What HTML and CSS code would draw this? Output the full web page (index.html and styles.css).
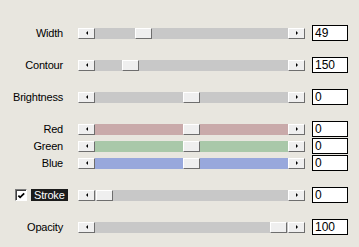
FILE: index.html
```html
<!DOCTYPE html>
<html lang="en">
<head>
  <meta charset="UTF-8">
  <title>Stroke settings</title>
  <link rel="stylesheet" href="styles.css">
</head>
<body>
  <div class="panel">
    <div class="row">
      <div class="name">Width</div>
      <div class="bar">
        <span class="btn left"></span>
        <div class="track"><span class="thumb" style="margin-left:40px"></span></div>
        <span class="btn right"></span>
      </div>
      <div class="field">49</div>
    </div>

    <div class="row gap">
      <div class="name">Contour</div>
      <div class="bar">
        <span class="btn left"></span>
        <div class="track"><span class="thumb" style="margin-left:27px"></span></div>
        <span class="btn right"></span>
      </div>
      <div class="field">150</div>
    </div>

    <div class="row gap">
      <div class="name">Brightness</div>
      <div class="bar">
        <span class="btn left"></span>
        <div class="track"><span class="thumb" style="margin-left:88px"></span></div>
        <span class="btn right"></span>
      </div>
      <div class="field">0</div>
    </div>

    <!-- colour channels -->
    <div class="row gap">
      <div class="name">Red</div>
      <div class="bar">
        <span class="btn left"></span>
        <div class="track red"><span class="thumb" style="margin-left:88px"></span></div>
        <span class="btn right"></span>
      </div>
      <div class="field">0</div>
    </div>

    <div class="row tight">
      <div class="name">Green</div>
      <div class="bar">
        <span class="btn left"></span>
        <div class="track green"><span class="thumb" style="margin-left:88px"></span></div>
        <span class="btn right"></span>
      </div>
      <div class="field">0</div>
    </div>

    <div class="row tight">
      <div class="name">Blue</div>
      <div class="bar">
        <span class="btn left"></span>
        <div class="track blue"><span class="thumb" style="margin-left:88px"></span></div>
        <span class="btn right"></span>
      </div>
      <div class="field">0</div>
    </div>

    <div class="row gap">
      <div class="name check">
        <span class="box">
          <svg width="10" height="10" viewBox="0 0 10 10"><path d="M1.5 4.5 L3.5 6.5 L8 2" fill="none" stroke="#000" stroke-width="2"/></svg>
        </span>
        <span class="sel">Stroke</span>
      </div>
      <div class="bar">
        <span class="btn left"></span>
        <div class="track"><span class="thumb" style="margin-left:1px"></span></div>
        <span class="btn right"></span>
      </div>
      <div class="field">0</div>
    </div>

    <div class="row gap">
      <div class="name">Opacity</div>
      <div class="bar">
        <span class="btn left"></span>
        <div class="track"><span class="thumb" style="margin-left:175px"></span></div>
        <span class="btn right"></span>
      </div>
      <div class="field">100</div>
    </div>
  </div>
</body>
</html>
```

FILE: styles.css
```css
body {
  margin: 0;
  background-color: #e8e6df;
  font-family: 'Liberation Sans', Arial, sans-serif;
  font-size: 11px;
  color: #000;
}

.panel {
  display: flex;
  flex-direction: column;
  padding-top: 25px;
}

.row {
  display: flex;
  align-items: center;
  height: 16px;
}

.row.gap { margin-top: 16px; }
.row.tight { margin-top: 1px; }

.name {
  width: 63px;
  text-align: right;
  white-space: nowrap;
  letter-spacing: -0.2px;
}

.name.check {
  display: flex;
  align-items: center;
  justify-content: flex-start;
  padding-left: 15px;
  box-sizing: border-box;
  overflow: visible;
}

.box {
  display: flex;
  align-items: center;
  justify-content: center;
  width: 12px;
  height: 12px;
  box-sizing: border-box;
  background: #fff;
  border: 1px solid;
  border-color: #7a7a7a #fff #fff #7a7a7a;
  box-shadow: inset 1px 1px 0 #404040;
  padding: 1px 0 0 1px;
}

.sel {
  margin-left: 4px;
  background: #1c1c1c;
  color: #fff;
  padding: 0 3px 0 3px;
  line-height: 12px;
  height: 12px;
}

/* scrollbar */
.bar {
  display: flex;
  width: 227px;
  height: 11px;
  margin-left: 15px;
}

.btn, .thumb {
  flex: none;
  display: flex;
  align-items: center;
  justify-content: center;
  width: 17px;
  height: 11px;
  box-sizing: border-box;
  background: #efefef;
  border: 1px solid;
  border-color: #fff #6e6e6e #6e6e6e #fff;
}

.btn::after {
  content: "";
  width: 0;
  height: 0;
  border-top: 2px solid transparent;
  border-bottom: 2px solid transparent;
}

.btn.left::after { border-right: 2px solid #000; }
.btn.right::after { border-left: 2px solid #000; }

.track {
  flex: 1;
  display: flex;
  background: #c8c8c8;
}

.track.red { background: #c9aaaa; }
.track.green { background: #a9c8a9; }
.track.blue { background: #98a8dc; }

.field {
  width: 36px;
  height: 16px;
  margin-left: 7px;
  box-sizing: border-box;
  background: #fff;
  border: 1px solid #000;
  font-size: 12px;
  line-height: 14px;
  padding-left: 2px;
}
```
